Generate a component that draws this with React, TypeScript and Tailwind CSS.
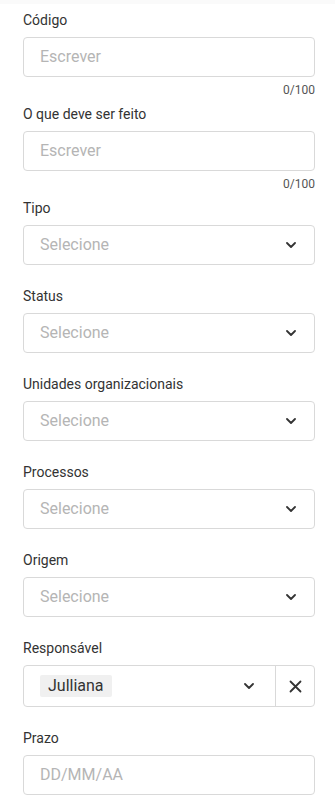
import React from 'react';

const Chevron = () => (
  <svg width="10" height="6" viewBox="0 0 10 6" fill="none" className="shrink-0">
    <path d="M1 1l4 4 4-4" stroke="#333333" strokeWidth="1.8" strokeLinecap="round" strokeLinejoin="round" />
  </svg>
);

const CloseIcon = () => (
  <svg width="13" height="13" viewBox="0 0 13 13" fill="none">
    <path d="M1.5 1.5l10 10M11.5 1.5l-10 10" stroke="#333333" strokeWidth="1.8" strokeLinecap="round" />
  </svg>
);

const Label = ({ children }: { children: React.ReactNode }) => (
  <div className="text-[14px] leading-[20px] text-[#333333] mb-[7px]">{children}</div>
);

const TextField = ({ label, placeholder }: { label: string; placeholder: string }) => (
  <div>
    <Label>{label}</Label>
    <div className="h-[40px] border border-[#d9d9d9] rounded-[4px] flex items-center px-[16px]">
      <span className="text-[16px] text-[#b5b5b5]">{placeholder}</span>
    </div>
    <div className="h-[27px] pt-[5px] text-right text-[12px] leading-[16px] text-[#555555]">0/100</div>
  </div>
);

const SelectField = ({ label }: { label: string }) => (
  <div className="mb-[21px]">
    <Label>{label}</Label>
    <div className="h-[40px] border border-[#d9d9d9] rounded-[4px] flex items-center justify-between pl-[16px] pr-[18px]">
      <span className="text-[16px] text-[#b5b5b5]">Selecione</span>
      <Chevron />
    </div>
  </div>
);

export default function App() {
  return (
    <div className="w-[335px] min-h-[800px] bg-white" style={{ fontFamily: 'Roboto, "Liberation Sans", sans-serif' }}>
      <div className="h-[4px] bg-[#fafafa]" />
      <div className="pl-[23px] pr-[20px] pt-[6px]">
        <TextField label="Código" placeholder="Escrever" />
        <TextField label="O que deve ser feito" placeholder="Escrever" />
        <SelectField label="Tipo" />
        <SelectField label="Status" />
        <SelectField label="Unidades organizacionais" />
        <SelectField label="Processos" />
        <SelectField label="Origem" />
        <div className="mb-[21px]">
          <Label>Responsável</Label>
          <div className="h-[42px] border border-[#d9d9d9] rounded-[4px] flex items-stretch">
            <div className="flex-1 flex items-center justify-between pl-[16px] pr-[21px]">
              <span className="bg-[#f0f0f0] rounded-[2px] px-[8px] h-[22px] flex items-center text-[16px] text-[#333333]">Julliana</span>
              <Chevron />
            </div>
            <div className="w-[39px] border-l border-[#d9d9d9] flex items-center justify-center">
              <CloseIcon />
            </div>
          </div>
        </div>
        <div>
          <Label>Prazo</Label>
          <div className="h-[40px] border border-[#d9d9d9] rounded-[4px] flex items-center px-[16px]">
            <span className="text-[16px] text-[#b5b5b5]">DD/MM/AA</span>
          </div>
        </div>
      </div>
    </div>
  );
}
